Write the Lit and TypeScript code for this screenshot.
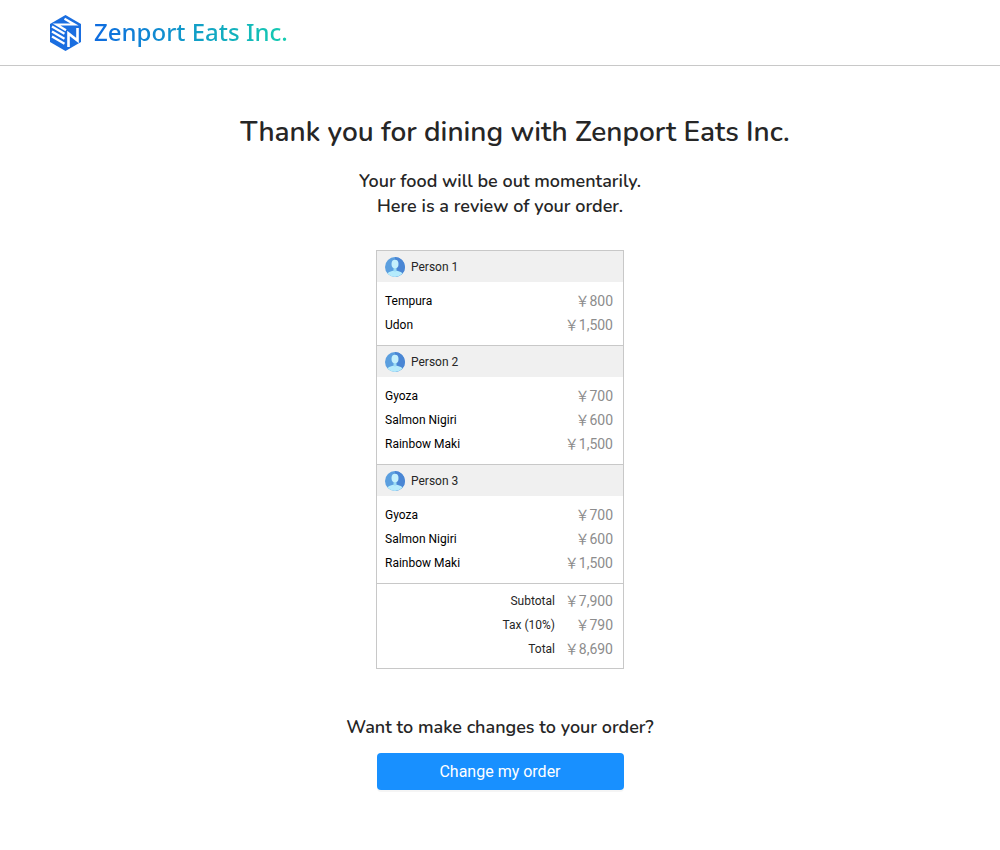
import { LitElement, html, css } from "lit";
import { customElement, property } from "lit/decorators.js";

interface Item {
  name: string;
  price: number;
}

interface Guest {
  name: string;
  items: Item[];
}

const yen = (n: number) => `￥${n.toLocaleString("en-US")}`;

@customElement("brand-logo")
export class BrandLogo extends LitElement {
  static styles = css`
    :host {
      display: flex;
    }
    .brand {
      display: flex;
      align-items: center;
      gap: 12px;
      text-decoration: none;
    }
    .mark {
      display: block;
      width: 32px;
      height: 36px;
    }
    .name {
      padding-bottom: 2px;
      font: 500 24px/34px "Noto Sans", "Open Sans", sans-serif;
      color: transparent;
      background: linear-gradient(90deg, #0e6be0, #15cdb0);
      -webkit-background-clip: text;
      background-clip: text;
    }
  `;

  render() {
    return html`
      <a class="brand" href="#">
        <svg class="mark" viewBox="0 0 32 36" aria-hidden="true">
          <path d="M15.500 0 31 9V27L15.500 36 0 27V9Z" fill="#1a6ee0" />
          <g fill="none" stroke="#fff" stroke-width="2.200">
            <path d="M14.500 3.800 24.500 9.500H6.500L16 15.200" />
            <path d="M2 11.500 14.500 18.700M2 16.500 14.500 23.700M2 21.500 14.500 28.700" />
            <path d="M18.500 32V18.500L27.500 25.500V13" stroke-width="2.600" />
          </g>
        </svg>
        <span class="name">Zenport Eats Inc.</span>
      </a>
    `;
  }
}

@customElement("guest-avatar")
export class GuestAvatar extends LitElement {
  static styles = css`
    :host {
      display: block;
    }
    .avatar {
      display: block;
      width: 20px;
      height: 20px;
    }
  `;

  render() {
    return html`
      <svg class="avatar" viewBox="0 0 20 20" aria-hidden="true">
        <defs>
          <clipPath id="disc"><circle cx="10" cy="10" r="10" /></clipPath>
        </defs>
        <g clip-path="url(#disc)">
          <rect width="20" height="20" fill="#5b9fdf" />
          <path d="M10 0H20V20H10Z" fill="#4a86d4" />
          <path d="M1.500 20C1.500 16 4.500 13.800 10 13.800S18.500 16 18.500 20Z" fill="#b5ebfc" />
          <path d="M8.500 10H11.500V14Q10 15 8.500 14Z" fill="#9adcf5" />
          <ellipse cx="10" cy="7" rx="3.500" ry="4.300" fill="#c4f0fc" />
        </g>
      </svg>
    `;
  }
}

@customElement("order-summary")
export class OrderSummary extends LitElement {
  @property({ attribute: false }) guests: Guest[] = [];

  static styles = css`
    :host {
      display: block;
      border: 1px solid #c8c8c8;
      font: 400 12px/24px Roboto, "Noto Sans CJK JP", sans-serif;
      color: #000;
    }
    .guest {
      border-bottom: 1px solid #c8c8c8;
    }
    .heading {
      display: flex;
      align-items: center;
      gap: 6px;
      height: 31px;
      padding: 0 8px;
      background: #f0f0f0;
    }
    .person {
      margin: 0;
      font-size: 12px;
      font-weight: 400;
      color: #262626;
    }
    .items {
      padding: 7px 10px 8px 8px;
    }
    .totals {
      padding: 5px 10px 7px 8px;
      color: #262626;
    }
    .table {
      width: 100%;
      border-collapse: collapse;
    }
    .label {
      padding: 0;
      height: 24px;
      font-weight: 400;
      text-align: left;
    }
    .totals .label {
      text-align: right;
    }
    .price {
      padding: 0;
      width: 58px;
      font-size: 14px;
      text-align: right;
      color: #8c8c8c;
      white-space: nowrap;
    }
  `;

  private row(label: string, amount: number) {
    return html`
      <tr>
        <th class="label" scope="row">${label}</th>
        <td class="price">${yen(amount)}</td>
      </tr>
    `;
  }

  render() {
    const subtotal = 7900;
    const tax = subtotal * 0.1;
    return html`
      ${this.guests.map(
        (g) => html`
          <section class="guest">
            <header class="heading">
              <guest-avatar></guest-avatar>
              <h2 class="person">${g.name}</h2>
            </header>
            <div class="items">
              <table class="table">
                <tbody>
                  ${g.items.map((i) => this.row(i.name, i.price))}
                </tbody>
              </table>
            </div>
          </section>
        `
      )}
      <div class="totals">
        <table class="table">
          <tbody>
            ${this.row("Subtotal", subtotal)} ${this.row("Tax (10%)", tax)}
            ${this.row("Total", subtotal + tax)}
          </tbody>
        </table>
      </div>
    `;
  }
}

@customElement("app-root")
export class AppRoot extends LitElement {
  static styles = css`
    :host {
      display: block;
      min-height: 100vh;
      background: #fff;
      color: #262626;
    }
    .bar {
      padding: 15px 50px 14px;
      border-bottom: 1px solid #c8c8c8;
    }
    .main {
      display: flex;
      flex-direction: column;
      align-items: center;
      padding: 46px 16px 60px;
      font-family: Nunito, "Noto Sans", sans-serif;
      font-weight: 600;
      text-align: center;
    }
    .title {
      margin: 0;
      padding-left: 30px;
      font-size: 28px;
      line-height: 40px;
      font-weight: 600;
    }
    .lead {
      margin: 17px 0 0;
      font-size: 18px;
      line-height: 25px;
    }
    .summary {
      box-sizing: border-box;
      width: 100%;
      max-width: 248px;
      margin-top: 31px;
      text-align: left;
    }
    .question {
      margin: 46px 0 0;
      font-size: 18px;
      line-height: 25px;
    }
    .change {
      width: 100%;
      max-width: 247px;
      height: 37px;
      margin-top: 13px;
      padding: 0;
      border: 0;
      border-radius: 4px;
      background: #1890ff;
      box-shadow: 0 2px 0 rgba(0, 0, 0, 0.04);
      color: #fff;
      font: 400 16px/24px Roboto, sans-serif;
      cursor: pointer;
    }
  `;

  private guests: Guest[] = [
    {
      name: "Person 1",
      items: [
        { name: "Tempura", price: 800 },
        { name: "Udon", price: 1500 },
      ],
    },
    {
      name: "Person 2",
      items: [
        { name: "Gyoza", price: 700 },
        { name: "Salmon Nigiri", price: 600 },
        { name: "Rainbow Maki", price: 1500 },
      ],
    },
    {
      name: "Person 3",
      items: [
        { name: "Gyoza", price: 700 },
        { name: "Salmon Nigiri", price: 600 },
        { name: "Rainbow Maki", price: 1500 },
      ],
    },
  ];

  render() {
    return html`
      <header class="bar"><brand-logo></brand-logo></header>
      <main class="main">
        <h1 class="title">Thank you for dining with Zenport Eats Inc.</h1>
        <p class="lead">
          Your food will be out momentarily.<br />Here is a review of your order.
        </p>
        <order-summary class="summary" .guests=${this.guests}></order-summary>
        <p class="question">Want to make changes to your order?</p>
        <button class="change" type="button">Change my order</button>
      </main>
    `;
  }
}
